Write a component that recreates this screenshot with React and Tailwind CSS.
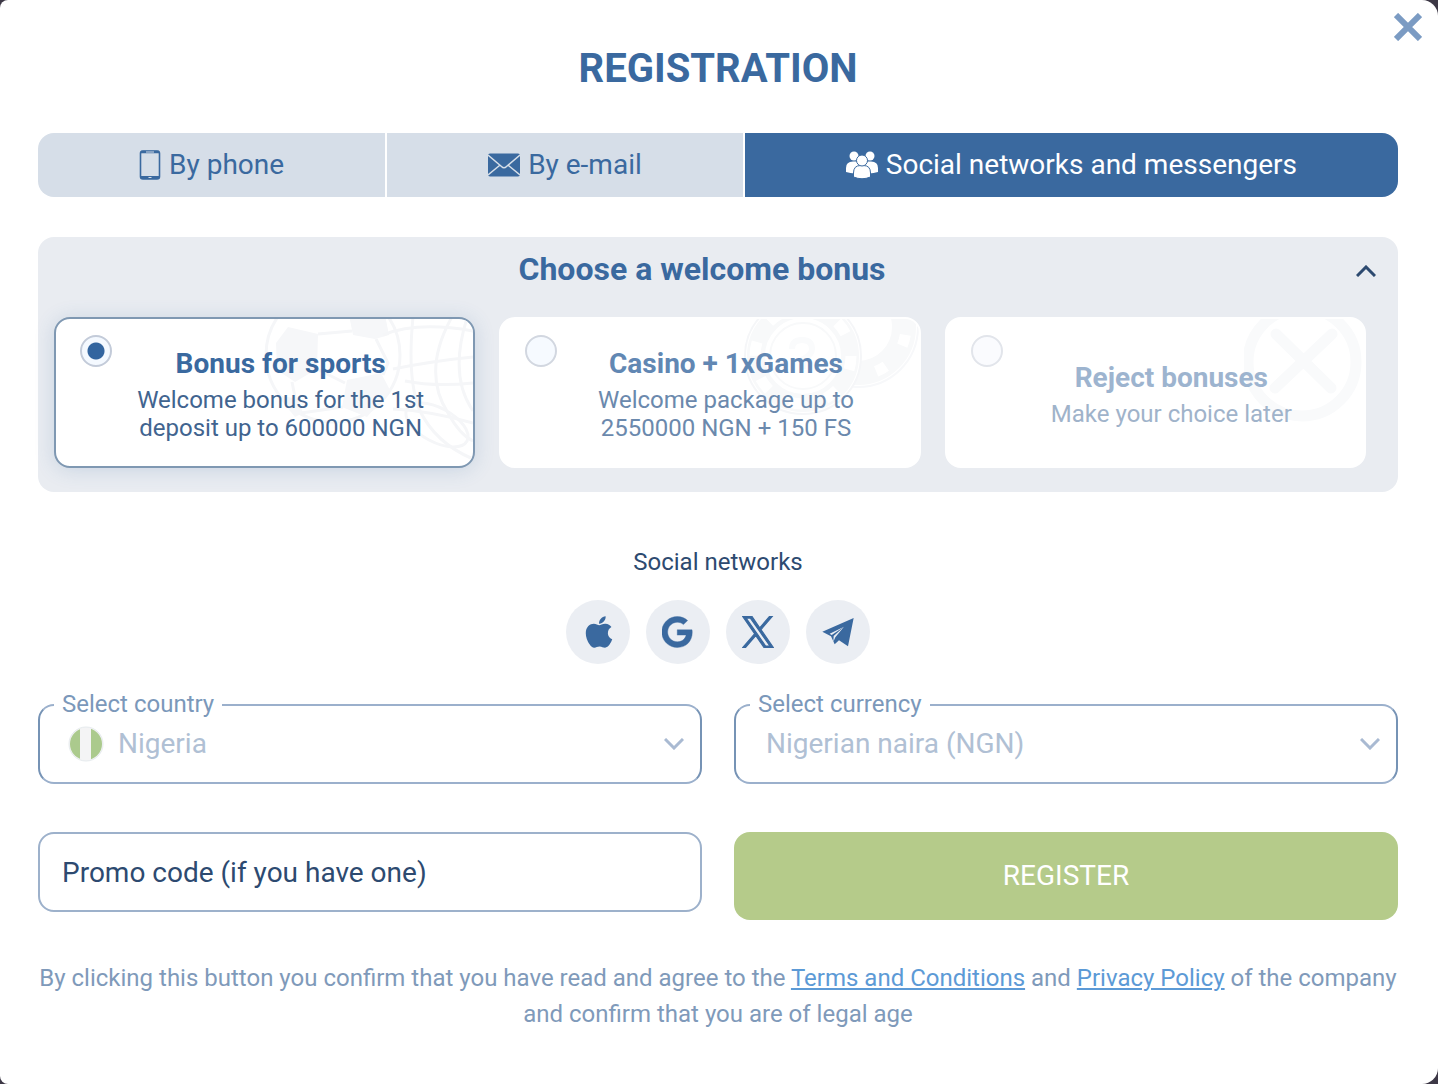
import React, { useState } from "react";
import { FaApple, FaGoogle } from "react-icons/fa";

const bonuses = [
  {
    id: "sports",
    title: "Bonus for sports",
    lines: ["Welcome bonus for the 1st", "deposit up to 600000 NGN"],
    titleColor: "text-[#3a699f]",
    textColor: "text-[#41648f]",
    radio: "border-[#c3cbd9] bg-[#f4f9ff]",
    Art: BallArt,
  },
  {
    id: "casino",
    title: "Casino + 1xGames",
    lines: ["Welcome package up to", "2550000 NGN + 150 FS"],
    titleColor: "text-[#6187b3]",
    textColor: "text-[#6b89ad]",
    radio: "border-[#d2d7e0] bg-[#f6faff]",
    Art: ChipArt,
  },
  {
    id: "reject",
    title: "Reject bonuses",
    lines: ["Make your choice later"],
    titleColor: "text-[#9db4cf]",
    textColor: "text-[#a0b3ca]",
    radio: "border-[#e2e5eb] bg-[#fafbfe]",
    Art: CrossArt,
  },
];

const tabs = [
  { id: "phone", label: "By phone", Icon: PhoneIcon },
  { id: "email", label: "By e-mail", Icon: MailIcon },
  { id: "social", label: "Social networks and messengers", Icon: PeopleIcon },
];

const networks = [
  { name: "Apple", icon: <AppleIcon /> },
  { name: "Google", icon: <GoogleIcon /> },
  { name: "X", icon: <XLogo /> },
  { name: "Telegram", icon: <PlaneIcon /> },
];

function PhoneIcon() {
  return (
    <svg width="22" height="32" viewBox="0 0 22 32" fill="none">
      <rect x="1.500" y="2" width="19" height="28" rx="2.500" stroke="currentColor" strokeWidth="1.600" />
      <path d="M2 3h18" stroke="currentColor" strokeWidth="2.500" />
      <path d="M2 28.500h18" stroke="currentColor" strokeWidth="3" />
      <path d="M7 3h8M9.500 28.500h3" stroke="#d6dee8" strokeWidth="1" />
    </svg>
  );
}

function MailIcon() {
  return (
    <svg width="32" height="24" viewBox="0 0 32 24">
      <rect x="0" y="0.500" width="32" height="23" rx="2" fill="currentColor" />
      <path d="M0 2l13.500 11.500q2.500 2.500 5 0L32 2M0 22l11.500-9.500M32 22L20.500 12.500" fill="none" stroke="#d6dee8" strokeWidth="1.500" />
    </svg>
  );
}

function PeopleIcon() {
  return (
    <svg width="32" height="28" viewBox="0 0 32 28" fill="currentColor">
      <circle cx="8" cy="5" r="4.500" />
      <circle cx="24" cy="5" r="4.500" />
      <path d="M0 21v-4q0-6.500 7-6.500h3q6 0 6 7v4q-8 2-16-.5zM32 21v-4q0-6.500-7-6.500h-3q-6 0-6 7v4q8 2 16-.5z" />
      <g stroke="#3a699f" strokeWidth="1">
        <path d="M7.500 26v-4q0-7.500 7-7.500h3q7 0 7 7.500v4q-8.500 3.500-17 0z" />
        <circle cx="16" cy="9.500" r="5.500" />
      </g>
    </svg>
  );
}

function AppleIcon() {
  return (
    <svg width="32" height="32" viewBox="0 0 32 32">
      <FaApple x="-1" y="-2" size={36} />
    </svg>
  );
}

function GoogleIcon() {
  return (
    <svg width="32" height="32" viewBox="0 0 32 32">
      <FaGoogle x="-1" y="0" size={32} stroke="currentColor" strokeWidth="6" />
    </svg>
  );
}

function XLogo() {
  return (
    <svg width="32" height="32" viewBox="0 0 1200 1227" fill="currentColor" stroke="currentColor" strokeWidth="45">
      <path d="M714.163 519.284L1160.890 0H1055.030L667.137 450.887L357.328 0H0L468.492 681.821L0 1226.370H105.866L515.491 750.218L842.672 1226.370H1200L714.137 519.284H714.163ZM569.165 687.828L521.697 619.934L144.011 79.694H306.615L611.412 515.685L658.880 583.579L1055.080 1150.300H892.476L569.165 687.854V687.828Z" />
    </svg>
  );
}

function PlaneIcon() {
  return (
    <svg width="34" height="30" viewBox="0 0 100 90">
      <path d="M97 3L80 88L53 70L40 82L29 58L3 44Z" fill="currentColor" />
      <path d="M68 29L25 50L31 54ZM68 29L37 57L36 74L42 61Z" fill="#ebeef3" />
    </svg>
  );
}

function BallArt() {
  return (
    <svg className="absolute right-0 top-0" width="210" height="147" viewBox="0 0 210 147" fill="none" stroke="#f5f6f8" strokeWidth="3">
      <circle cx="70" cy="36" r="67" />
      <g fill="#f6f7f9" stroke="none">
        <path d="M25 8l30 7-1 35-22 13-18-12-1-27z" />
        <path d="M86-4h36l4 20-14 4-22-4z" />
        <path d="M84 61l34-7 9 17-23 27-25-10z" />
        <path d="M14 76l18 22 8-4-5-14z" />
      </g>
      <path d="M55 15l34-3M113 20l12 24-5 12M54 50l28 14M29 63l4 20M80 88l-42 6" />
      <path d="M190-4q-32 56-5 98 12 22 25 28M150-2q-6 60 6 92 16 34 54 50M205-4q-20 60 5 96" />
      <path d="M120 16q34-14 90-4M130 50q40-8 80-12M130 90q38 2 80 14M142 62q30 6 68 2" />
      <ellipse cx="174" cy="106" rx="34" ry="17" transform="rotate(28 174 106)" />
    </svg>
  );
}

function ChipArt() {
  return (
    <svg className="absolute right-0 top-0" width="176" height="120" viewBox="0 0 176 120" fill="none">
      <circle cx="115" cy="8" r="60" stroke="#f7f8fa" strokeWidth="2" />
      <circle cx="115" cy="8" r="46" stroke="#f8f9fa" strokeWidth="24" />
      <circle cx="115" cy="8" r="48" stroke="#ffffff" strokeWidth="11" strokeDasharray="11 26.700" strokeDashoffset="-8" />
      <circle cx="60" cy="37" r="58" fill="#fff" stroke="#f5f6f8" strokeWidth="2" />
      <circle cx="60" cy="37" r="47" stroke="#f8f9fa" strokeWidth="18" />
      <circle cx="60" cy="37" r="48" stroke="#ffffff" strokeWidth="11" strokeDasharray="14 23.700" />
      <circle cx="60" cy="37" r="33" stroke="#f8f9fa" strokeWidth="2" />
      <path d="M49 30q0-9 10-9t10 9q0 6-9 10v10" stroke="#fafbfc" strokeWidth="6" />
    </svg>
  );
}

function CrossArt() {
  return (
    <svg className="absolute right-0 top-0" width="120" height="104" viewBox="0 0 120 104" fill="none" stroke="#f9fafb" strokeWidth="11">
      <circle cx="58" cy="43" r="54" />
      <path d="M32 15l55 54M88 15L31 69" strokeLinecap="round" strokeWidth="11" />
    </svg>
  );
}

function Chevron({ className }) {
  return (
    <svg className={className} width="20" height="12" viewBox="0 0 20 12" fill="none" stroke="currentColor" strokeWidth="3">
      <path d="M1 1l9 9 9-9" />
    </svg>
  );
}

function SelectField({ id, label, value, flag }) {
  return (
    <div className="relative">
      <label htmlFor={id} className="absolute -top-3.5 left-4 bg-white px-2 text-2xl leading-7 text-[#7b98ba]">
        {label}
      </label>
      {flag && (
        <svg className="pointer-events-none absolute left-[30px] top-[22px]" width="36" height="36" viewBox="0 0 36 36">
          <clipPath id="flag-circle">
            <circle cx="18" cy="18" r="16" />
          </clipPath>
          <circle cx="18" cy="18" r="17" fill="#f4f4f5" stroke="#e6ebee" strokeWidth="1" />
          <path d="M0 0h12v36H0zM23 0h13v36H23z" fill="#abca8d" clipPath="url(#flag-circle)" />
        </svg>
      )}
      <select
        id={id}
        disabled
        className={`h-20 w-full appearance-none rounded-2xl border-2 border-x-[#7693b5] border-y-[#9bb0cc] pr-16 text-[28px] text-[#b0c0d4] opacity-100 ${flag ? "pl-[78px]" : "pl-[30px]"}`}
      >
        <option>{value}</option>
      </select>
      <Chevron className="pointer-events-none absolute right-[18px] top-[34px] text-[#a9bad2]" />
    </div>
  );
}

export default function App() {
  const [tab, setTab] = useState("social");
  const [bonus, setBonus] = useState("sports");
  const [promo, setPromo] = useState("");

  return (
    <div className="min-h-screen bg-[#3d3846] font-['Roboto',sans-serif]">
      <main className="relative min-h-screen rounded-l-lg rounded-r-2xl bg-white pb-13 pl-[38px] pr-10 pt-[45px]">
        <button type="button" aria-label="Close" className="absolute right-4 top-[13px] text-[#7b9bc3]">
          <svg width="28" height="28" viewBox="0 0 28 28" stroke="currentColor" strokeWidth="6">
            <path d="M2 2l24 24M26 2L2 26" />
          </svg>
        </button>

        <h1 className="text-center text-[40px] font-bold leading-12 text-[#3a699f]">REGISTRATION</h1>

        <div className="mt-10 flex h-16 gap-0.5 overflow-hidden rounded-2xl text-[28px]">
          {tabs.map(({ id, label, Icon }) => (
            <button
              key={id}
              type="button"
              onClick={() => setTab(id)}
              className={`flex flex-auto items-center justify-center gap-2 ${tab === id ? "bg-[#3a699f] text-white" : "bg-[#d6dee8] text-[#3a699f]"}`}
            >
              <Icon />
              {label}
            </button>
          ))}
        </div>

        <section className="mt-10 rounded-2xl bg-[#e9ecf1] pb-6 pl-4 pr-8">
          <div className="relative flex h-20 justify-center pr-4 pt-3">
            <h2 className="text-[32px] font-bold leading-10 text-[#3a699f]">Choose a welcome bonus</h2>
            <button type="button" aria-label="Collapse" className="absolute -right-2.5 top-7 text-[#2d4a70]">
              <Chevron className="rotate-180" />
            </button>
          </div>
          <div className="grid grid-cols-3 gap-6">
            {bonuses.map(({ id, title, lines, titleColor, textColor, radio, Art }) => (
              <label
                key={id}
                className={`relative flex h-[151px] flex-col justify-center overflow-hidden rounded-2xl border-2 bg-white pl-8 text-center ${bonus === id ? "border-[#7f98b2] shadow-[0_2px_20px_rgba(58,105,159,0.18)]" : "border-white"}`}
              >
                <Art />
                <input
                  type="radio"
                  name="bonus"
                  checked={bonus === id}
                  onChange={() => setBonus(id)}
                  className={`absolute left-6 top-4 size-8 appearance-none rounded-full border-2 ${radio} checked:bg-[radial-gradient(circle,#33659f_8px,#f4f9ff_9px)]`}
                />
                <span className={`relative mb-0.5 text-[28px] font-bold leading-10 ${titleColor}`}>{title}</span>
                {lines.map(line => (
                  <span key={line} className={`relative text-2xl leading-7 ${textColor}`}>{line}</span>
                ))}
              </label>
            ))}
          </div>
        </section>

        <section className="mt-14 text-center">
          <h3 className="text-2xl leading-7 text-[#2d4a70]">Social networks</h3>
          <div className="mt-6 flex justify-center gap-4">
            {networks.map(({ name, icon }) => (
              <button
                key={name}
                type="button"
                aria-label={name}
                className="flex size-16 items-center justify-center rounded-full bg-[#ebeef3] text-[#3a699f]"
              >
                {icon}
              </button>
            ))}
          </div>
        </section>

        <form className="mt-10 grid grid-cols-2 gap-x-8 gap-y-12" onSubmit={e => e.preventDefault()}>
          <SelectField id="country" label="Select country" value="Nigeria" flag />
          <SelectField id="currency" label="Select currency" value="Nigerian naira (NGN)" />
          <input
            aria-label="Promo code (if you have one)"
            value={promo}
            onChange={e => setPromo(e.target.value)}
            placeholder="Promo code (if you have one)"
            className="h-20 w-full rounded-2xl border-2 border-[#9db1cb] px-[22px] text-[28px] text-[#2d4a70] placeholder:text-[#2d4a70]"
          />
          <button type="submit" className="h-22 rounded-2xl bg-[#b5cb8a] text-[28px] text-white">REGISTER</button>
        </form>

        <p className="mt-10 text-center text-2xl leading-9 text-[#7f9aba]">
          By clicking this button you confirm that you have read and agree to the{" "}
          <a href="#terms" className="text-[#5c9ad6] underline">Terms and Conditions</a> and{" "}
          <a href="#privacy" className="text-[#5c9ad6] underline">Privacy Policy</a> of the company and confirm that you are of legal age
        </p>
      </main>
    </div>
  );
}
